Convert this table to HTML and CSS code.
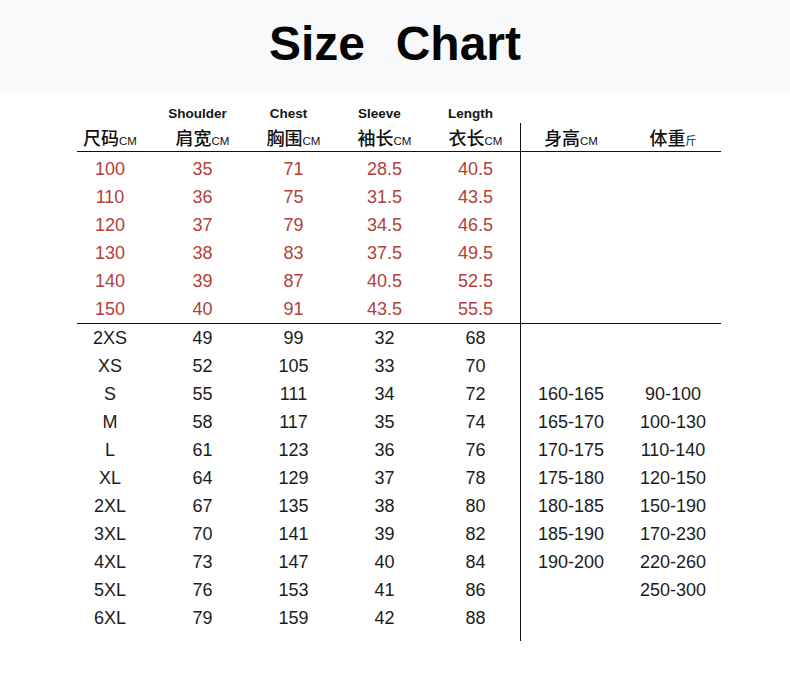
FILE: index.html
```html
<!DOCTYPE html>
<html lang="zh">
<head>
<meta charset="utf-8">
<title>Size Chart</title>
<link rel="stylesheet" href="styles.css">
</head>
<body>
<header class="banner"><h1 class="title">Size  Chart</h1></header>
<main class="chart">
  <section class="group group-main">
    <div class="row row-en">
      <span class="cell"></span>
      <span class="cell">Shoulder</span>
      <span class="cell">Chest</span>
      <span class="cell">Sleeve</span>
      <span class="cell">Length</span>
    </div>
    <div class="row row-zh">
      <span class="cell">尺码<small class="unit">CM</small></span>
      <span class="cell">肩宽<small class="unit">CM</small></span>
      <span class="cell">胸围<small class="unit">CM</small></span>
      <span class="cell">袖长<small class="unit">CM</small></span>
      <span class="cell">衣长<small class="unit">CM</small></span>
    </div>
    <div class="rule rule-inset"></div>
    <div class="block block-kids">
      <div class="row row-data"><span class="cell">100</span><span class="cell">35</span><span class="cell">71</span><span class="cell">28.5</span><span class="cell">40.5</span></div>
      <div class="row row-data"><span class="cell">110</span><span class="cell">36</span><span class="cell">75</span><span class="cell">31.5</span><span class="cell">43.5</span></div>
      <div class="row row-data"><span class="cell">120</span><span class="cell">37</span><span class="cell">79</span><span class="cell">34.5</span><span class="cell">46.5</span></div>
      <div class="row row-data"><span class="cell">130</span><span class="cell">38</span><span class="cell">83</span><span class="cell">37.5</span><span class="cell">49.5</span></div>
      <div class="row row-data"><span class="cell">140</span><span class="cell">39</span><span class="cell">87</span><span class="cell">40.5</span><span class="cell">52.5</span></div>
      <div class="row row-data"><span class="cell">150</span><span class="cell">40</span><span class="cell">91</span><span class="cell">43.5</span><span class="cell">55.5</span></div>
    </div>
    <div class="rule rule-inset"></div>
    <div class="block block-adult">
      <div class="row row-data"><span class="cell">2XS</span><span class="cell">49</span><span class="cell">99</span><span class="cell">32</span><span class="cell">68</span></div>
      <div class="row row-data"><span class="cell">XS</span><span class="cell">52</span><span class="cell">105</span><span class="cell">33</span><span class="cell">70</span></div>
      <div class="row row-data"><span class="cell">S</span><span class="cell">55</span><span class="cell">111</span><span class="cell">34</span><span class="cell">72</span></div>
      <div class="row row-data"><span class="cell">M</span><span class="cell">58</span><span class="cell">117</span><span class="cell">35</span><span class="cell">74</span></div>
      <div class="row row-data"><span class="cell">L</span><span class="cell">61</span><span class="cell">123</span><span class="cell">36</span><span class="cell">76</span></div>
      <div class="row row-data"><span class="cell">XL</span><span class="cell">64</span><span class="cell">129</span><span class="cell">37</span><span class="cell">78</span></div>
      <div class="row row-data"><span class="cell">2XL</span><span class="cell">67</span><span class="cell">135</span><span class="cell">38</span><span class="cell">80</span></div>
      <div class="row row-data"><span class="cell">3XL</span><span class="cell">70</span><span class="cell">141</span><span class="cell">39</span><span class="cell">82</span></div>
      <div class="row row-data"><span class="cell">4XL</span><span class="cell">73</span><span class="cell">147</span><span class="cell">40</span><span class="cell">84</span></div>
      <div class="row row-data"><span class="cell">5XL</span><span class="cell">76</span><span class="cell">153</span><span class="cell">41</span><span class="cell">86</span></div>
      <div class="row row-data"><span class="cell">6XL</span><span class="cell">79</span><span class="cell">159</span><span class="cell">42</span><span class="cell">88</span></div>
    </div>
  </section>
  <section class="group group-side">
    <div class="row row-zh">
      <span class="cell">身高<small class="unit">CM</small></span>
      <span class="cell cell-weight">体重<small class="unit unit-cn">斤</small></span>
    </div>
    <div class="rule"></div>
    <div class="block block-kids">
      <div class="row row-data"><span class="cell"></span><span class="cell"></span></div>
      <div class="row row-data"><span class="cell"></span><span class="cell"></span></div>
      <div class="row row-data"><span class="cell"></span><span class="cell"></span></div>
      <div class="row row-data"><span class="cell"></span><span class="cell"></span></div>
      <div class="row row-data"><span class="cell"></span><span class="cell"></span></div>
      <div class="row row-data"><span class="cell"></span><span class="cell"></span></div>
    </div>
    <div class="rule"></div>
    <div class="block block-adult">
      <div class="row row-data"><span class="cell"></span><span class="cell"></span></div>
      <div class="row row-data"><span class="cell"></span><span class="cell"></span></div>
      <div class="row row-data"><span class="cell">160-165</span><span class="cell cell-weight">90-100</span></div>
      <div class="row row-data"><span class="cell">165-170</span><span class="cell cell-weight">100-130</span></div>
      <div class="row row-data"><span class="cell">170-175</span><span class="cell cell-weight">110-140</span></div>
      <div class="row row-data"><span class="cell">175-180</span><span class="cell cell-weight">120-150</span></div>
      <div class="row row-data"><span class="cell">180-185</span><span class="cell cell-weight">150-190</span></div>
      <div class="row row-data"><span class="cell">185-190</span><span class="cell cell-weight">170-230</span></div>
      <div class="row row-data"><span class="cell">190-200</span><span class="cell cell-weight">220-260</span></div>
      <div class="row row-data"><span class="cell"></span><span class="cell cell-weight">250-300</span></div>
      <div class="row row-data"><span class="cell"></span><span class="cell"></span></div>
    </div>
  </section>
</main>
</body>
</html>
```
FILE: styles.css
```css
* { box-sizing: border-box; }

html, body {
  margin: 0;
  padding: 0;
  background: #ffffff;
}

body {
  font-family: "Liberation Sans", Arial, "Noto Sans CJK SC", sans-serif;
  color: #1c1c1c;
}

.banner {
  height: 93px;
  padding-top: 17px;
  background: #f8f9fb;
}

.title {
  margin: 0;
  text-align: center;
  font-family: "Liberation Sans", Arial, sans-serif;
  font-weight: 700;
  font-size: 48px;
  line-height: 54px;
  color: #050505;
  white-space: pre;
  word-spacing: 2px;
}

.chart {
  display: flex;
  align-items: flex-start;
  margin-left: 64px;
  padding-top: 12px;
}

.group-main { width: 456px; }

.group-side {
  width: 201px;
  margin-top: 18px;
  padding-bottom: 9px;
  border-left: 1px solid #111;
}

.row {
  display: grid;
  text-align: center;
}

.group-main .row { grid-template-columns: 92px 93px 89px 93px 89px; }
.group-side .row { grid-template-columns: 100px 100px; }

.row-en {
  height: 16px;
  margin-top: 1px;
  margin-bottom: 1px;
  font-weight: 700;
  font-size: 13.5px;
  line-height: 16px;
  color: #151515;
}

.row-en .cell { padding-right: 10px; }

.row-zh {
  height: 28px;
  font-family: "Noto Sans CJK SC", sans-serif;
  font-weight: 500;
  font-size: 18px;
  line-height: 28px;
  color: #111;
}

.unit {
  font-family: "Liberation Sans", Arial, sans-serif;
  font-weight: 400;
  font-size: 11.5px;
  line-height: 1;
}

.unit-cn {
  font-family: "Noto Sans CJK SC", sans-serif;
  font-size: 11px;
}

.cell-weight { padding-left: 4px; }

.rule {
  height: 1px;
  background: #111;
}

.rule-inset { margin-left: 13px; }

.block-kids {
  padding-top: 3px;
  color: #b3403a;
}

.row-data {
  height: 28px;
  font-size: 18px;
  line-height: 28px;
}
```
